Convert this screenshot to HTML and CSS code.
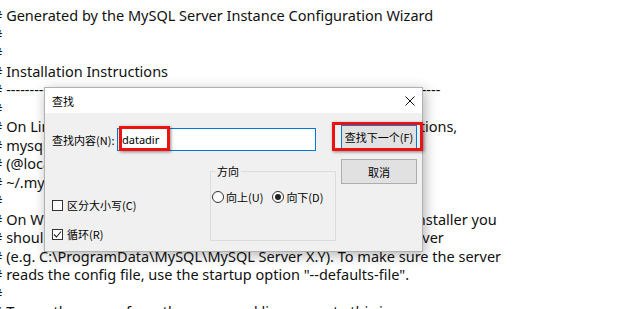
FILE: index.html
```html
<!DOCTYPE html>
<html lang="zh-CN">
<head>
<meta charset="utf-8">
<title>查找</title>
<link rel="stylesheet" href="styles.css">
</head>
<body>
<div class="doc">
<div class="ln"># Generated by the MySQL Server Instance Configuration Wizard</div>
<div class="ln">#</div>
<div class="ln">#</div>
<div class="ln"># Installation Instructions</div>
<div class="ln"># ---------------------------------------------------------------------------------------------</div>
<div class="ln">#</div>
<div class="ln"># On Linux you can copy this file to /etc/my.cnf to set global options,</div>
<div class="ln"># mysql-data-dir/my.cnf to set server-specific options</div>
<div class="ln"># (@localstatedir@ for this installation) or to</div>
<div class="ln"># ~/.my.cnf to set user-specific options.</div>
<div class="ln">#</div>
<div class="ln"># On Windows, when MySQL has been installed using MySQL Installer you</div>
<div class="ln"># should keep this file in the ProgramData directory of your server</div>
<div class="ln"># (e.g. C:\ProgramData\MySQL\MySQL Server X.Y). To make sure the server</div>
<div class="ln"># reads the config file, use the startup option "--defaults-file".</div>
<div class="ln">#</div>
<div class="ln"># To run the server from the command line, execute this in a</div>
</div>

<div class="dlg">
  <div class="titlebar">
    <span class="title">查找</span>
    <svg class="close" width="10" height="10" viewBox="0 0 10 10"><path d="M0.5 0.5 L9.5 9.5 M9.5 0.5 L0.5 9.5" stroke="#111" stroke-width="1" fill="none"/></svg>
  </div>
  <div class="dbody">
    <div class="main">
      <div class="row1">
        <span class="lbl">查找内容(N):</span>
        <div class="input">datadir</div>
      </div>
      <div class="lower">
        <div class="checks">
          <div class="chk"><span class="box"></span><span>区分大小写(C)</span></div>
          <div class="chk"><span class="box"><svg width="9" height="9" viewBox="0 0 9 9"><path d="M1 4.5 L3.5 7 L8 1.5" stroke="#222" stroke-width="1.1" fill="none"/></svg></span><span>循环(R)</span></div>
        </div>
        <fieldset class="dir">
          <legend>方向</legend>
          <div class="radios">
            <div class="rad"><span class="circ"></span><span>向上(U)</span></div>
            <div class="rad"><span class="circ on"></span><span>向下(D)</span></div>
          </div>
        </fieldset>
      </div>
    </div>
    <div class="btns">
      <div class="btn def">查找下一个(F)</div>
      <div class="btn cancel">取消</div>
    </div>
  </div>
</div>

<div class="mark m1"></div>
<div class="mark m2"></div>
</body>
</html>
```
FILE: styles.css
```css
html, body {
  margin: 0;
  padding: 0;
  background: #fff;
}
body {
  width: 620px;
  height: 309px;
  overflow: hidden;
  position: relative;
}
.doc {
  font-family: "Noto Sans", "Open Sans", sans-serif;
  font-size: 14.5px;
  line-height: 18.5px;
  color: #111;
  padding-top: 6px;
  margin-left: -7px;
}
.ln {
  white-space: pre;
  height: 18.5px;
}
.dlg {
  position: absolute;
  left: 44px;
  top: 87px;
  width: 377px;
  height: 163px;
  border: 1px solid #b0b0b0;
  background: #f0f0f0;
  box-shadow: 2px 3px 12px rgba(0, 0, 0, 0.3);
  font-family: "Noto Sans CJK SC", "Noto Sans", sans-serif;
  font-size: 11px;
  color: #000;
  display: flex;
  flex-direction: column;
  white-space: nowrap;
}
.titlebar {
  height: 25px;
  background: #fff;
  display: flex;
  align-items: center;
  justify-content: space-between;
  padding: 0 7px;
}
.title {
  line-height: 14px;
}
.close {
  display: block;
}
.dbody {
  flex: 1;
  display: flex;
  gap: 5px;
  padding: 12px 5px 0 7px;
}
.main {
  width: 284px;
  display: flex;
  flex-direction: column;
}
.row1 {
  margin-top: 3px;
  display: flex;
  align-items: center;
}
.lbl {
  width: 65px;
  flex-shrink: 0;
  line-height: 14px;
}
.input {
  width: 199px;
  height: 23px;
  box-sizing: border-box;
  border: 1px solid #0078d7;
  background: #fff;
  padding-left: 4px;
  display: flex;
  align-items: center;
  font-family: "Noto Sans", sans-serif;
  font-size: 11px;
}
.lower {
  margin-top: 13px;
  display: flex;
  justify-content: space-between;
}
.checks {
  padding-top: 34px;
  display: flex;
  flex-direction: column;
  gap: 15px;
}
.chk {
  display: flex;
  align-items: center;
  gap: 4px;
  height: 14px;
  line-height: 14px;
}
.box {
  width: 11px;
  height: 11px;
  box-sizing: border-box;
  border: 1px solid #333;
  background: #fff;
  display: flex;
  align-items: center;
  justify-content: center;
}
.box svg {
  display: block;
}
.dir {
  margin: 0;
  width: 126px;
  box-sizing: border-box;
  border: 1px solid #dcdcdc;
  padding: 12px 0 10px 1px;
}
.dir legend {
  padding: 0 2px;
  margin-left: 3px;
  line-height: 14px;
}
.radios {
  display: flex;
  align-items: center;
  gap: 9px;
}
.rad {
  display: flex;
  align-items: center;
  gap: 2px;
  height: 14px;
  line-height: 14px;
}
.circ {
  width: 12px;
  height: 12px;
  box-sizing: border-box;
  border: 1px solid #333;
  border-radius: 50%;
  background: #fff;
  display: flex;
  align-items: center;
  justify-content: center;
}
.circ.on::after {
  content: "";
  width: 6px;
  height: 6px;
  border-radius: 50%;
  background: #222;
}
.btns {
  width: 76px;
  display: flex;
  flex-direction: column;
  gap: 10px;
}
.btn {
  box-sizing: border-box;
  background: #e1e1e1;
  border: 1px solid #adadad;
  display: flex;
  align-items: center;
  justify-content: center;
  line-height: 14px;
}
.btn.def {
  height: 24px;
  border-color: #0078d7;
}
.btn.cancel {
  height: 25px;
}
.mark {
  position: absolute;
  box-sizing: border-box;
  border: 3px solid #ee1111;
  box-shadow: 1px 1px 3px rgba(0, 0, 0, 0.45);
}
.m1 {
  left: 119px;
  top: 126px;
  width: 51px;
  height: 25px;
}
.m2 {
  left: 332px;
  top: 122px;
  width: 91px;
  height: 29px;
}
```
